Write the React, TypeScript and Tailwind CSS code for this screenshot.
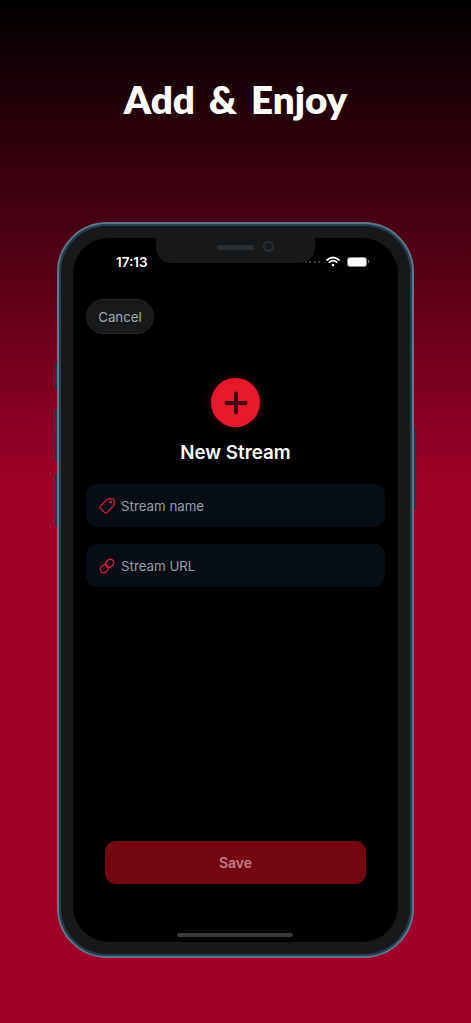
import React from 'react';

const SideButton: React.FC<{ className: string }> = ({ className }) => (
  <div className={`absolute w-[2px] bg-[#1b3a50] ${className}`}></div>
);

const WifiIcon = () => (
  <svg width="14" height="11" viewBox="0 0 14 11" fill="none" stroke="white" strokeWidth="1.7" strokeLinecap="round">
    <path d="M1 4 Q7 -1 13 4" />
    <path d="M3.3 6.2 Q7 3 10.7 6.2" />
    <circle cx="7" cy="9" r="1.3" fill="white" stroke="none" />
  </svg>
);

const TagIcon = () => (
  <svg width="16" height="16" viewBox="0 0 16 16" fill="none" stroke="#d8203a" strokeWidth="1.2" strokeLinejoin="round">
    <path d="M8.4 1.2 L13.4 0.9 a1.6 1.6 0 0 1 1.7 1.7 L14.8 7.6 L7.8 14.6 a1.5 1.5 0 0 1 -2.1 0 L1.4 10.3 a1.5 1.5 0 0 1 0 -2.1 Z" />
    <circle cx="11.7" cy="4.2" r="0.8" />
  </svg>
);

const LinkIcon = () => (
  <svg width="16" height="16" viewBox="0 0 16 16" fill="none" stroke="#d8203a" strokeWidth="1.3">
    <rect x="6.2" y="1.9" width="8.8" height="7" rx="3.5" transform="rotate(-45 10.6 5.4)" />
    <rect x="1" y="7.1" width="8.8" height="7" rx="3.5" transform="rotate(-45 5.4 10.6)" />
  </svg>
);

const Field: React.FC<{ icon: React.ReactNode; label: string }> = ({ icon, label }) => (
  <div className="flex h-[43px] items-center gap-[6px] rounded-[11px] bg-[#060d15] pl-[13px]">
    {icon}
    <span className="pt-[2px] text-[13.3px] text-[#979ba6]">{label}</span>
  </div>
);

export default function App() {
  return (
    <div className="h-[1023px] w-[471px] overflow-hidden bg-[linear-gradient(to_bottom,#000000_0px,#a30029_500px,#a30029_100%)] font-['Inter',sans-serif]">
      <h1 className="flex h-[222px] items-start justify-center pt-[75px] font-['Lato',sans-serif] text-[38.5px] leading-[48px] font-extrabold text-white [word-spacing:5px]">
        Add &amp; Enjoy
      </h1>

      <div className="relative ml-[57px] h-[736px] w-[357px] rounded-[50px] border-2 border-[#5d7a8d] bg-[#16181a] p-[14px] shadow-[inset_0_0_0_2px_#263f4f]">
        <SideButton className="top-[140px] -left-[4px] h-[25px] rounded-l-sm" />
        <SideButton className="top-[185px] -left-[4px] h-[52px] rounded-l-sm" />
        <SideButton className="top-[250px] -left-[4px] h-[52px] rounded-l-sm" />
        <SideButton className="top-[205px] -right-[4px] h-[80px] rounded-r-sm" />

        <div className="relative flex h-full flex-col overflow-hidden rounded-[36px] bg-black">
          {/* notch */}
          <div className="absolute top-0 left-[83px] flex h-[25px] w-[159px] items-start justify-center gap-[9px] rounded-b-[15px] bg-[#16181a] pt-[3px] pl-[20px]">
            <div className="mt-[4px] h-[5px] w-[37px] rounded-full bg-[#2b2e31]"></div>
            <div className="h-[11px] w-[11px] rounded-full border-2 border-[#2b2e31] bg-[#16181a]"></div>
          </div>

          <div className="flex h-[61px] items-start justify-between pt-[16px] pr-[29px] pl-[43px]">
            <span className="text-[13.5px] leading-[17px] font-semibold text-white">17:13</span>
            <div className="flex items-center gap-[6px] pt-[2px]">
              <div className="flex gap-[2.5px]">
                <div className="h-[2px] w-[2px] rounded-full bg-[#55585c]"></div>
                <div className="h-[2px] w-[2px] rounded-full bg-[#55585c]"></div>
                <div className="h-[2px] w-[2px] rounded-full bg-[#55585c]"></div>
                <div className="h-[2px] w-[2px] rounded-full bg-[#55585c]"></div>
              </div>
              <WifiIcon />
              <div className="ml-[1px] flex items-center gap-[1px]">
                <div className="h-[10px] w-[20px] rounded-[3px] border border-[#8a8a8a] bg-white"></div>
                <div className="h-[3px] w-[1px] bg-[#777]"></div>
              </div>
            </div>
          </div>

          <div className="flex flex-1 flex-col px-[13px]">
            <div className="flex h-[35px] w-[68px] items-center justify-center rounded-full border border-[#232527] bg-[#17191b] pt-[2px] text-[13.3px] text-[#a5a9b0]">
              Cancel
            </div>

            <div className="mt-[44px] flex justify-center">
              <div className="flex h-[49px] w-[49px] items-center justify-center rounded-full bg-[#e8182f] shadow-[0_0_10px_rgba(232,24,47,0.3)]">
                <svg width="24" height="24" viewBox="0 0 24 24" fill="none" stroke="#3e0510" strokeWidth="4" strokeLinecap="round">
                  <path d="M12 2.5 V21.5 M2.5 12 H21.5" />
                </svg>
              </div>
            </div>

            <h2 className="mt-[13px] text-center text-[18.8px] leading-[26px] font-semibold text-white">New Stream</h2>

            <div className="mt-[18px] flex flex-col gap-[17px]">
              <Field icon={<TagIcon />} label="Stream name" />
              <Field icon={<LinkIcon />} label="Stream URL" />
            </div>

            <div className="mt-auto flex flex-col items-center">
              <div className="flex h-[43px] w-[261px] items-center justify-center rounded-[11px] bg-[#740812] text-[14px] font-semibold text-[#c57d87]">
                Save
              </div>
              <div className="mt-[49px] mr-[2px] mb-[5px] h-[4px] w-[116px] rounded-full bg-[#3a3b3d]"></div>
            </div>
          </div>
        </div>
      </div>
    </div>
  );
}
